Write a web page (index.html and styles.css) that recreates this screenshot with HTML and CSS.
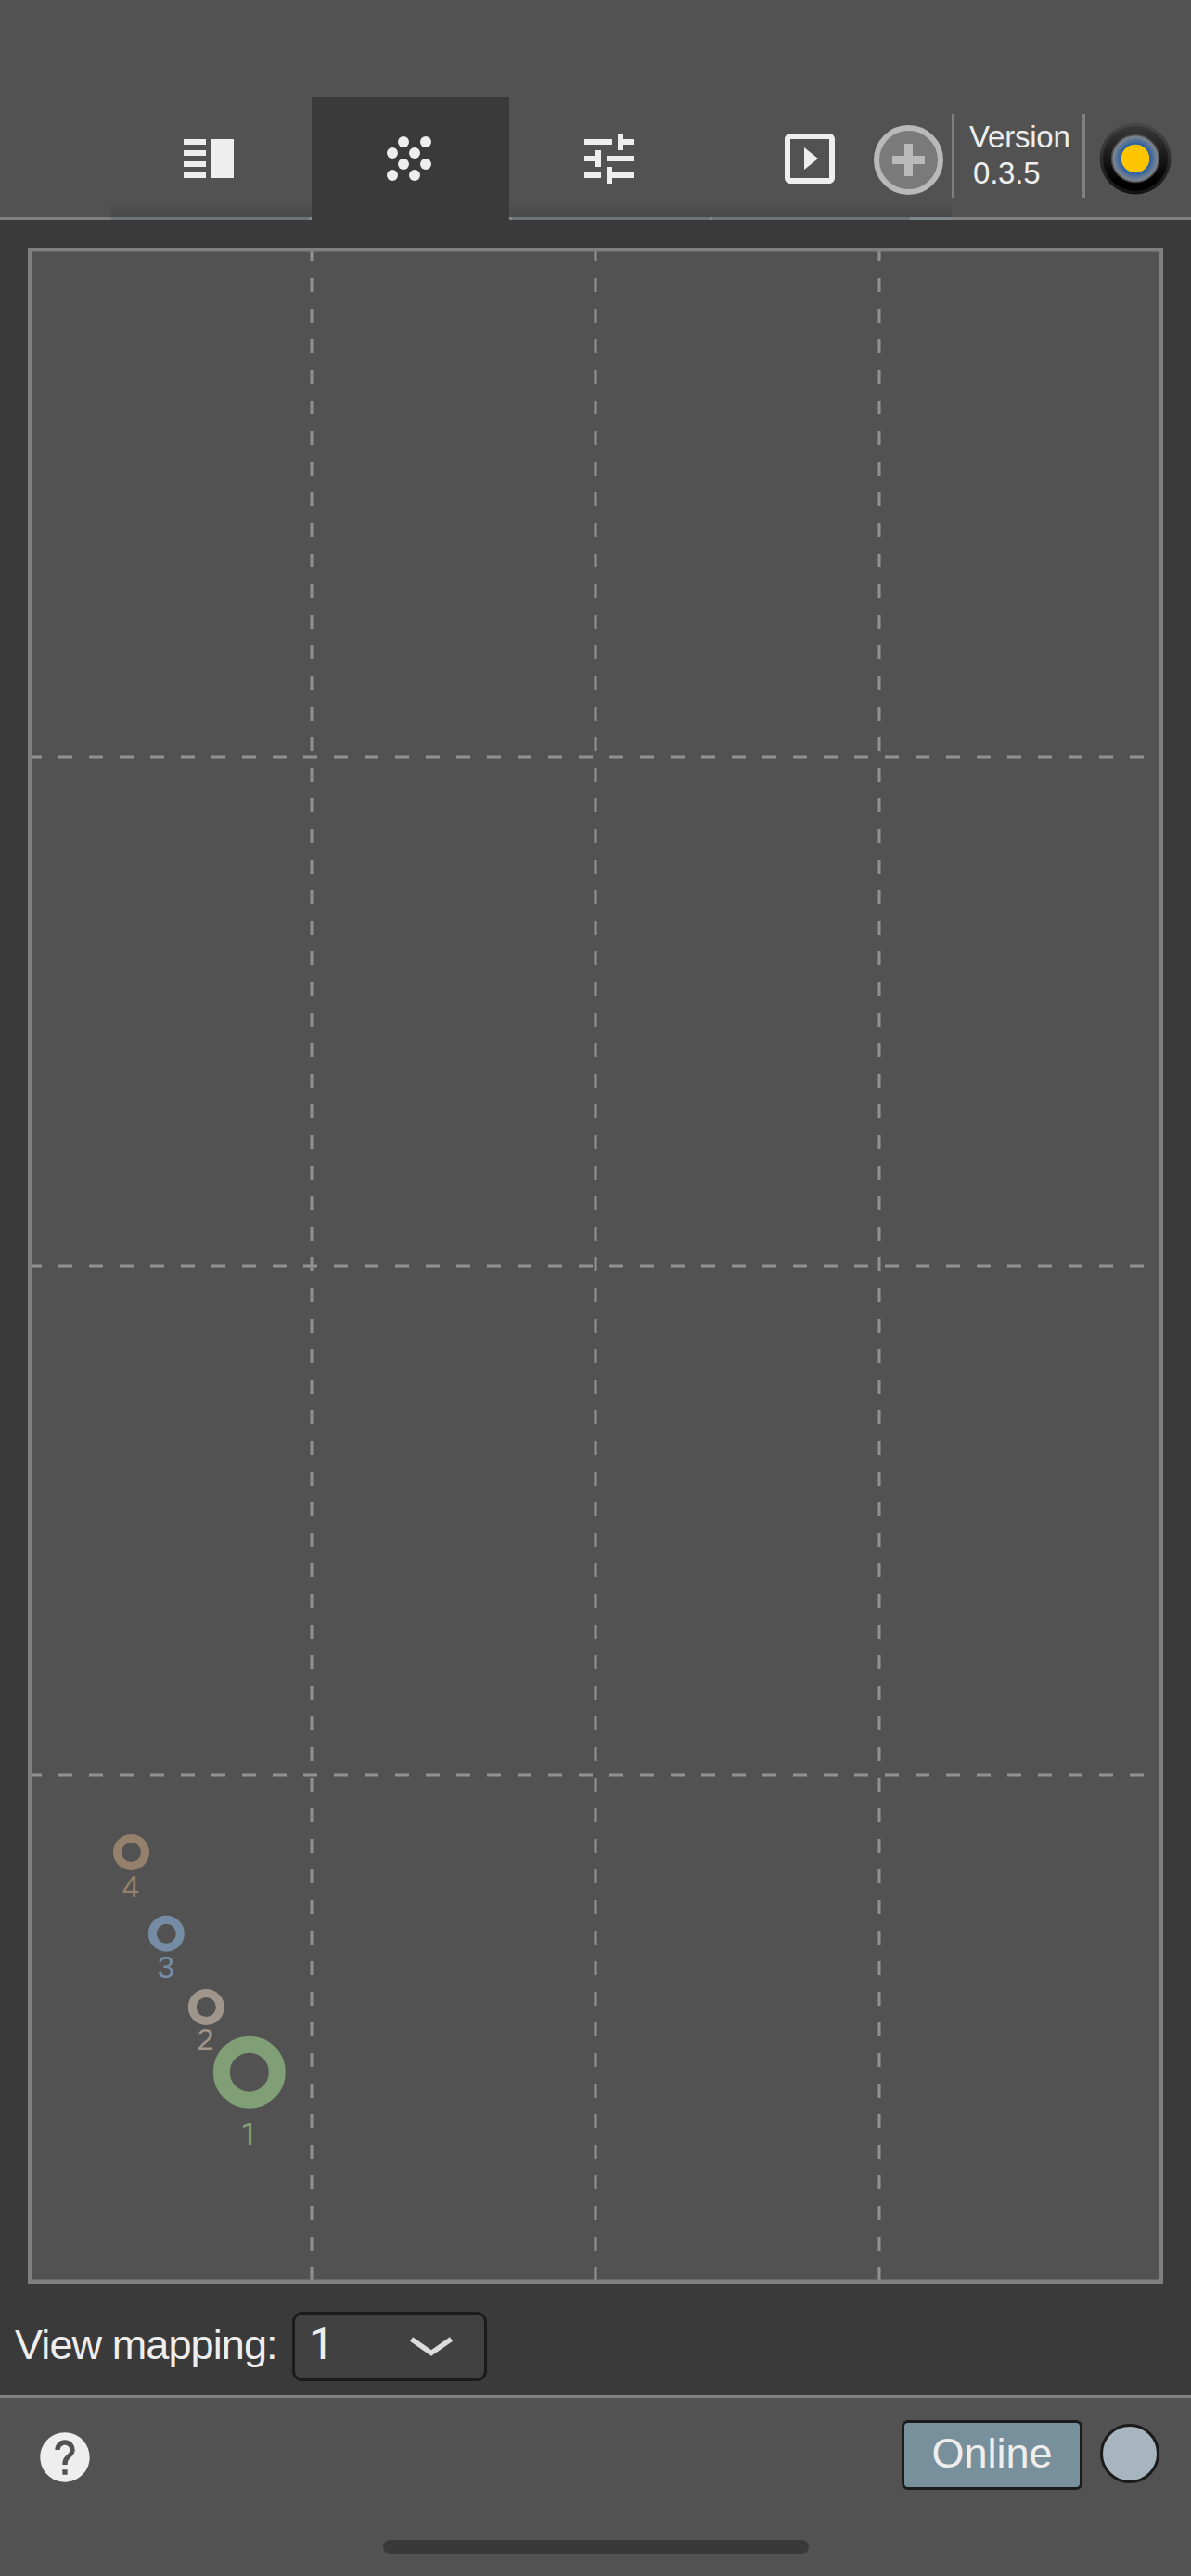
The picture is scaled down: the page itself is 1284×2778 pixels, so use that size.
FILE: index.html
```html
<!DOCTYPE html>
<html lang="en">
<head>
<meta charset="utf-8">
<title>View mapping</title>
<link rel="stylesheet" href="styles.css">
</head>
<body>
<header class="topbar">
  <nav class="tabs">
    <a class="tab"><svg class="icon" viewBox="0 0 24 24"><path d="M3 15h8v-2H3v2zm0 4h8v-2H3v2zm0-8h8V9H3v2zm0-6v2h8V5H3zm10 0h8v14h-8V5z"/></svg></a>
    <a class="tab tab-active"><svg class="icon" viewBox="0 0 24 24"><circle cx="10" cy="6" r="2"/><circle cx="18" cy="6" r="2"/><circle cx="6" cy="10" r="2"/><circle cx="14" cy="10" r="2"/><circle cx="10" cy="14" r="2"/><circle cx="18" cy="14" r="2"/><circle cx="6" cy="18" r="2"/><circle cx="14" cy="18" r="2"/></svg></a>
    <a class="tab"><svg class="icon" viewBox="0 0 24 24"><path d="M3 17v2h6v-2H3zM3 5v2h10V5H3zm10 16v-2h8v-2h-8v-2h-2v6h2zM7 9v2H3v2h4v2h2V9H7zm14 4v-2H11v2h10zm-6-4h2V7h4V5h-4V3h-2v6z"/></svg></a>
    <a class="tab"><svg class="icon" viewBox="0 0 24 24"><path d="M10 8v8l5-4-5-4zm9-5H5c-1.1 0-2 .9-2 2v14c0 1.1.9 2 2 2h14c1.1 0 2-.9 2-2V5c0-1.100-.9-2-2-2zm0 16H5V5h14v14z"/></svg></a>
    <div class="tab-rest"></div>
    <svg class="add" viewBox="0 0 75 75"><circle cx="37.500" cy="37.500" r="34.500"/><path d="M33 20h9v13h13v9H42v13h-9V42H20v-9h13z"/></svg>
  </nav>
  <div class="version"><span>Version</span><span class="number">0.3.5</span></div>
  <svg class="led" viewBox="0 0 78 78">
    <defs>
      <linearGradient id="rim" x1="0" y1="0" x2="0" y2="1"><stop offset="0" stop-color="#484848"/><stop offset="1" stop-color="#121212"/></linearGradient>
      <linearGradient id="body" x1="0" y1="0" x2="0" y2="1"><stop offset="0" stop-color="#393939"/><stop offset=".85" stop-color="#000"/></linearGradient>
      <radialGradient id="glow"><stop offset=".56" stop-color="#1c58a8"/><stop offset=".9" stop-color="#76828f"/><stop offset="1" stop-color="#7c7c7c"/></radialGradient>
    </defs>
    <circle cx="39" cy="39" r="38.500" fill="url(#rim)"/>
    <circle cx="39" cy="39" r="35" fill="url(#body)"/>
    <circle cx="39" cy="39" r="25.500" fill="url(#glow)" stroke="#484848" stroke-width="1.500"/>
    <circle cx="39" cy="39" r="15.300" fill="#ffc400"/>
  </svg>
</header>
<main class="stage">
  <svg class="canvas" viewBox="30 267 1224 2196">
    <rect class="field" x="30" y="267" width="1224" height="2196"/>
    <path class="guides" d="M336 267V2460M642 267V2460M948 267V2460M30 816H1250M30 1365H1250M30 1914H1250"/>
    <rect class="frame" x="32.250" y="269.250" width="1219.500" height="2191.500"/>
    <g class="source s4"><circle cx="141.500" cy="1997.500" r="15"/><text x="141" y="2046">4</text></g>
    <g class="source s3"><circle cx="179.300" cy="2085.300" r="15"/><text x="179" y="2133">3</text></g>
    <g class="source s2"><circle cx="222.300" cy="2164.500" r="15"/><text x="221.500" y="2211">2</text></g>
    <g class="source s1"><circle cx="268.800" cy="2234.700" r="30"/><text x="268.500" y="2313">1</text></g>
  </svg>
  <div class="mapping">
    <span class="label">View mapping:</span>
    <div class="select"><span>1</span><svg class="chevron" viewBox="0 0 48 24"><path d="M2.500 3.500L24 18.500L45.500 3.500"/></svg></div>
  </div>
</main>
<footer class="bottombar">
  <div class="status">
    <svg class="help" viewBox="0 0 24 24"><path d="M12 2C6.480 2 2 6.480 2 12s4.480 10 10 10 10-4.480 10-10S17.520 2 12 2zm1 17h-2v-2h2v2zm2.070-7.750l-.9.920C13.450 12.900 13 13.500 13 15h-2v-.5c0-1.100.450-2.100 1.170-2.830l1.240-1.260c.370-.360.590-.860.590-1.410 0-1.100-.9-2-2-2s-2 .9-2 2H8c0-2.210 1.790-4 4-4s4 1.790 4 4c0 .880-.360 1.680-.930 2.250z"/></svg>
    <div class="online">Online</div>
    <div class="dot"></div>
  </div>
  <div class="home"></div>
</footer>
</body>
</html>
```
FILE: styles.css
```css
* { box-sizing: border-box; }
body {
  margin: 0;
  width: 1284px;
  height: 2778px;
  display: flex;
  flex-direction: column;
  overflow: hidden;
  background: #3a3a3a;
  color: #eee;
  font-family: "Liberation Sans", Arial, sans-serif;
}
svg { display: block; flex: none; }

/* Top bar */
.topbar {
  height: 237px;
  flex: none;
  display: flex;
  align-items: flex-start;
  padding: 105px 0 0 120px;
  background: linear-gradient(#808080, #808080) bottom / 100% 3px no-repeat #525252;
}
.tabs { display: flex; width: 906px; height: 132px; position: relative; }
.tab {
  width: 216px;
  padding: 30px 0 0 69px;
  background:
    linear-gradient(#7f888c, #7f888c) right bottom / 3px 3px no-repeat,
    linear-gradient(#6b7377, #6b7377) bottom / 100% 3px no-repeat,
    linear-gradient(#525252 112px, #4a4a4a 129px);
}
.tab-active {
  background:
    linear-gradient(#7f888c, #7f888c) right bottom / 3px 3px no-repeat,
    linear-gradient(#525252 112px, #4a4a4a 129px) right / 3px 100% no-repeat,
    #3a3a3a;
}
.tab-rest {
  width: 42px;
  background:
    linear-gradient(#7f888c, #7f888c) bottom / 100% 3px no-repeat,
    linear-gradient(#525252 112px, #4a4a4a 129px);
}
.icon { width: 72px; height: 72px; fill: #eee; }
/* The add button overlaps the right edge of the last tab */
.add { position: absolute; right: 9px; top: 30px; width: 75px; height: 75px; }
.add circle { fill: #7a7a7a; stroke: #b9b9b9; stroke-width: 6; }
.add path { fill: #b9b9b9; }
.version {
  width: 144px;
  height: 90px;
  margin-top: 18px;
  padding: 5px 0 0 16px;
  border: solid #808080;
  border-width: 0 3px;
  display: flex;
  flex-direction: column;
  font-size: 33px;
  line-height: 39px;
  letter-spacing: -0.2px;
}
.number { padding-left: 4px; }
.led { width: 78px; height: 78px; margin: 27px 0 0 15px; }

/* Mapping view */
.stage { height: 2346px; flex: none; padding: 30px 0 0; }
.canvas { width: 1224px; height: 2196px; margin-left: 30px; }
.field { fill: #525252; }
.frame { fill: none; stroke: #7f7f7f; stroke-width: 4.5; }
.guides { fill: none; stroke: #919191; stroke-width: 3; stroke-dasharray: 15 18; }
.source { stroke-width: 9; }
.source circle { fill: none; stroke: currentColor; }
.source text { fill: currentColor; stroke: none; font-size: 33px; text-anchor: middle; }
.s1 { color: #809f76; stroke-width: 18; }
.s1 text { font-family: Roboto, sans-serif; }
.s2 { color: #a0958a; }
.s3 { color: #758ca4; }
.s4 { color: #94806b; }
.mapping { display: flex; align-items: center; height: 75px; margin-top: 30px; padding-left: 16px; }
.label { width: 299px; font-size: 45px; letter-spacing: -0.9px; white-space: nowrap; line-height: 70px; padding-bottom: 4px; }
.select {
  width: 210px;
  height: 75px;
  border: 3px solid #1b1b1b;
  border-radius: 11px;
  background: #414141;
  display: flex;
  align-items: center;
  justify-content: space-between;
  padding: 0 33px 6px 15px;
  font: 48px Roboto, sans-serif;
}
.chevron { width: 48px; height: 24px; margin-top: 6px; }
.chevron path { fill: none; stroke: #dcdcdc; stroke-width: 5.5; }

/* Bottom bar */
.bottombar { flex: 1; border-top: 3px solid #808080; background: #525252; }
.status { display: flex; height: 153px; padding: 24px 34px 0 38px; }
.help { width: 64px; height: 64px; margin-top: 8px; fill: #eee; }
.online {
  width: 195px;
  height: 75px;
  margin-left: auto;
  border: 3px solid #1b1b1b;
  border-radius: 7px;
  background: #78909c;
  font-size: 45px;
  line-height: 66px;
  text-align: center;
}
.dot {
  width: 64px;
  height: 64px;
  margin: 4px 0 0 19px;
  border: 3px solid #1b1b1b;
  border-radius: 50%;
  background: #a7b6be;
}
.home { width: 459px; height: 15px; margin-left: 413px; border-radius: 8px; background: #393939; }
```
